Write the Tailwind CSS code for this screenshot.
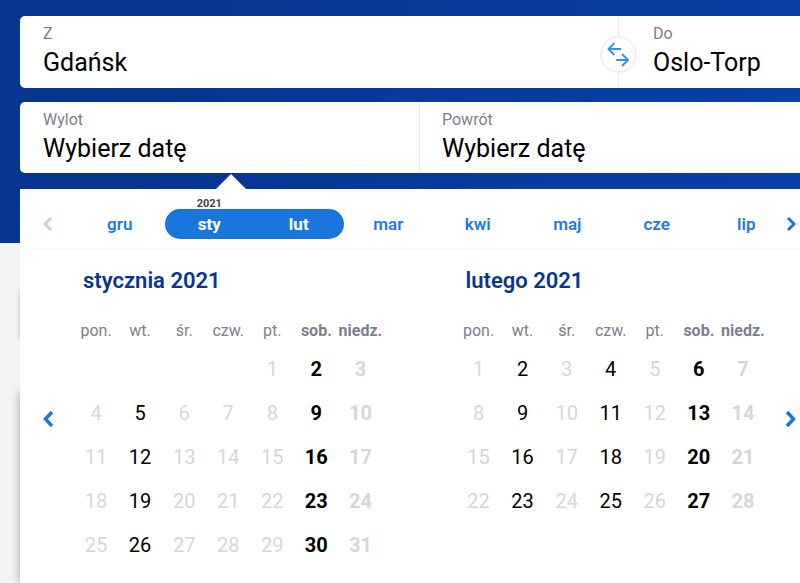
<!DOCTYPE html>
<html lang="pl">
<head>
<meta charset="utf-8">
<meta name="viewport" content="width=device-width, initial-scale=1">
<title>Wybierz datę</title>
<script src="https://cdn.jsdelivr.net/npm/@tailwindcss/browser@4"></script>
</head>
<body class="min-h-screen overflow-x-hidden bg-[#f3f3f3] bg-[linear-gradient(100deg,#073590_20%,#0b40a8_100%)] bg-[length:100%_243px] bg-no-repeat font-[Roboto,sans-serif] text-black">
<main class="pt-4 pl-5">
  <form class="flex flex-col gap-[14px]">
    <div class="grid grid-cols-[599fr_181fr] rounded-l-[5px] bg-white">
      <div class="relative flex h-[72px] flex-col border-r border-[#ececec] pt-[6px] pl-[23px]">
        <label for="from" class="text-base leading-6 text-[#7b808c]">Z</label>
        <input id="from" type="text" value="Gdańsk" class="h-[34px] w-full bg-transparent text-[25px] outline-none">
        <button type="button" aria-label="Zamień" class="absolute top-5 -right-[19px] flex size-[37px] items-center justify-center rounded-full border-2 border-[#f0f0f0] bg-white">
          <svg class="h-[25px] w-[23px]" viewBox="0 0 23 25" fill="none" stroke="#2a96f0" stroke-width="1.9" aria-hidden="true"><path d="M14 7H1.800M7.500 1L1.500 7L7.500 13M9.200 18H21M15 12L21 18L15 24"/></svg>
        </button>
      </div>
      <div class="flex h-[72px] flex-col pt-[6px] pl-[34px]">
        <label for="to" class="text-base leading-6 text-[#7b808c]">Do</label>
        <input id="to" type="text" value="Oslo-Torp" class="h-[34px] w-full bg-transparent text-[25px] outline-none">
      </div>
    </div>
    <div class="grid grid-cols-[400fr_380fr] rounded-l-[5px] bg-white">
      <div class="flex h-[71px] flex-col border-r border-[#ececec] pt-[6px] pl-[23px]">
        <label for="out" class="text-base leading-6 text-[#7b808c]">Wylot</label>
        <input id="out" type="text" value="Wybierz datę" class="h-[34px] w-full bg-transparent text-[25px] outline-none">
      </div>
      <div class="flex h-[71px] flex-col pt-[6px] pl-[22px]">
        <label for="back" class="text-base leading-6 text-[#7b808c]">Powrót</label>
        <input id="back" type="text" value="Wybierz datę" class="h-[34px] w-full bg-transparent text-[25px] outline-none">
      </div>
    </div>
  </form>

  <div class="relative mt-4">
    <div class="absolute top-[100px] left-0 h-[50px] w-full shadow-[0_0_4px_rgba(0,0,0,0.25)]"></div>
    <div class="absolute top-[204px] bottom-0 left-0 w-full shadow-[0_0_9px_rgba(0,0,0,0.35)]"></div>
    <section class="relative bg-white">
      <svg class="absolute -top-[15px] left-[195px] h-4 w-8" viewBox="0 0 32 16" fill="#fff" aria-hidden="true"><path d="M0 16L15.500 .5Q16 0 16.500 .5L32 16z"/></svg>
      <nav class="flex items-center border-b border-[#f6f7f8] pt-5 pb-[9px]">
        <button type="button" aria-label="Poprzednie miesiące" class="flex h-[30px] w-[55px] items-center pl-[23px]">
          <svg class="h-[14px] w-[9px]" viewBox="0 0 9 14" fill="none" stroke="#b5d6fb" stroke-width="3" aria-hidden="true"><path d="M8 1L2 7L8 13"/></svg>
        </button>
        <ul id="months" class="-mr-[9px] grid flex-1 grid-cols-8"></ul>
        <button type="button" aria-label="Następne miesiące" class="flex h-[30px] w-[18px] items-center justify-center">
          <svg class="h-[14px] w-[9px]" viewBox="0 0 9 14" fill="none" stroke="#1a76dd" stroke-width="3" aria-hidden="true"><path d="M1 1L7 7L1 13"/></svg>
        </button>
      </nav>
      <div class="flex pt-[18px] pb-4">
        <button type="button" aria-label="Poprzedni miesiąc" class="flex w-[54px] items-center pt-1 pl-[23px]">
          <svg class="h-4 w-[10px]" viewBox="0 0 10 16" fill="none" stroke="#1a76dd" stroke-width="3.500" aria-hidden="true"><path d="M9 1L2.500 8L9 15"/></svg>
        </button>
        <div id="calendars" class="grid flex-1 grid-cols-2 gap-[74px]"></div>
        <button type="button" aria-label="Następny miesiąc" class="flex w-[35px] items-center justify-end pt-1 pr-1">
          <svg class="h-4 w-[10px]" viewBox="0 0 10 16" fill="none" stroke="#1a76dd" stroke-width="3.500" aria-hidden="true"><path d="M1 1L7.500 8L1 15"/></svg>
        </button>
      </div>
    </section>
  </div>
</main>
<script>
const selected = {
  sty: 'rounded-l-full bg-[#1976dc] font-bold text-white',
  lut: 'rounded-r-full bg-[#1976dc] font-bold text-white'
};
document.getElementById('months').innerHTML = ['gru', 'sty', 'lut', 'mar', 'kwi', 'maj', 'cze', 'lip'].map(m =>
  `<li class="relative">${m === 'sty' ? '<span class="absolute -top-[11px] w-full text-center text-[11px] leading-3 font-bold text-[#444]">2021</span>' : ''}
   <button type="button" class="h-[30px] w-full pt-px text-[17px] ${selected[m] || 'font-semibold text-[#1a7ce5]'}">${m}</button></li>`).join('');

// start: column of the first day, Monday being 0
const months = [
  { title: 'stycznia 2021', start: 4, days: 31, open: [2, 5, 9, 12, 16, 19, 23, 26, 30] },
  { title: 'lutego 2021', start: 0, days: 28, open: [2, 4, 6, 9, 11, 13, 16, 18, 20, 23, 25, 27] }
];
const names = ['pon.', 'wt.', 'śr.', 'czw.', 'pt.', 'sob.', 'niedz.'];
document.getElementById('calendars').innerHTML = months.map(m => {
  let rows = '';
  for (let first = 1 - m.start; first <= m.days; first += 7) {
    rows += '<tr>';
    for (let c = 0; c < 7; c++) {
      const d = first + c;
      const weight = c > 4 ? 'font-bold' : 'font-normal';
      rows += d < 1 || d > m.days ? '<td class="h-11 p-0"></td>' :
        `<td class="h-11 p-0"><button type="button" class="block h-11 w-full text-center text-xl ${weight} ${m.open.includes(d) ? 'text-black' : 'text-[#d3d7db]'}"${m.open.includes(d) ? '' : ' disabled'}>${d}</button></td>`;
    }
    rows += '</tr>';
  }
  return `<div><h2 class="mb-5 pl-[9px] text-[22px] leading-7 font-semibold text-[#073590]">${m.title}</h2>
    <table class="w-full table-fixed border-collapse"><thead><tr>${names.map((n, i) =>
      `<th scope="col" class="h-8 p-0 text-center text-base whitespace-nowrap text-[#7b808c] ${i > 4 ? 'font-bold' : 'font-normal'}">${n}</th>`).join('')}</tr></thead><tbody>${rows}</tbody></table></div>`;
}).join('');
</script>
</body>
</html>
